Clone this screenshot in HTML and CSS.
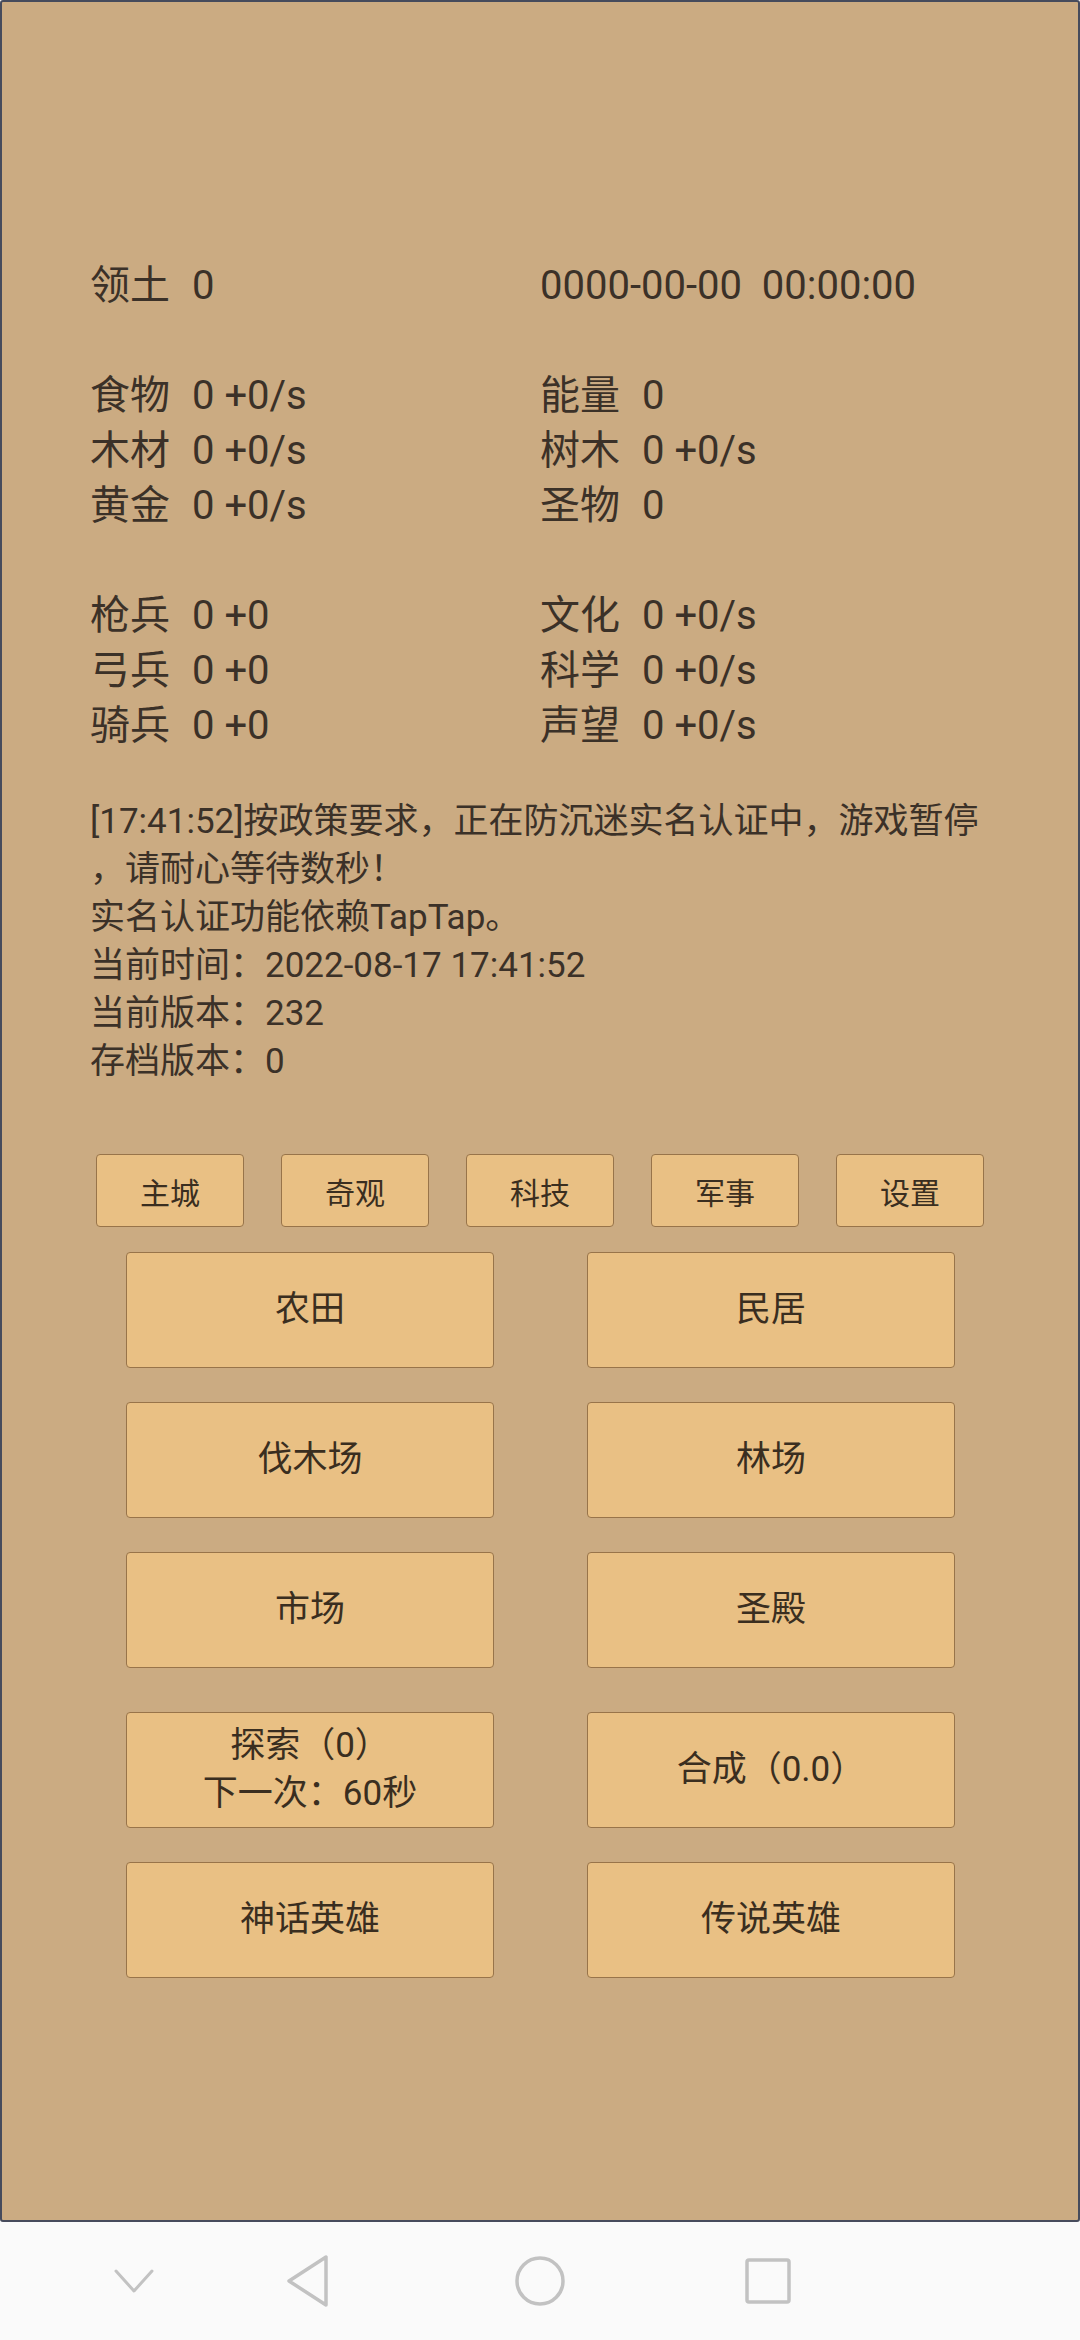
FILE: index.html
```html
<!DOCTYPE html>
<html>
	<head>
		<meta charset="utf-8">
		<title></title>
		<link rel="stylesheet" href="styles.css">
	</head>
	<body>
		<div class="game">
			<div class="stats">
				<div class="stat"><span class="label">领土</span>0</div>
				<div class="stat date">0000-00-00  00:00:00</div>
				<div class="blank"></div>
				<div class="stat"><span class="label">食物</span>0 +0/s</div>
				<div class="stat"><span class="label">能量</span>0</div>
				<div class="stat"><span class="label">木材</span>0 +0/s</div>
				<div class="stat"><span class="label">树木</span>0 +0/s</div>
				<div class="stat"><span class="label">黄金</span>0 +0/s</div>
				<div class="stat"><span class="label">圣物</span>0</div>
				<div class="blank"></div>
				<div class="stat"><span class="label">枪兵</span>0 +0</div>
				<div class="stat"><span class="label">文化</span>0 +0/s</div>
				<div class="stat"><span class="label">弓兵</span>0 +0</div>
				<div class="stat"><span class="label">科学</span>0 +0/s</div>
				<div class="stat"><span class="label">骑兵</span>0 +0</div>
				<div class="stat"><span class="label">声望</span>0 +0/s</div>
			</div>

			<div class="log">
				[17:41:52]按政策要求，正在防沉迷实名认证中，游戏暂停<br>
				，请耐心等待数秒！<br>
				实名认证功能依赖TapTap。<br>
				当前时间：2022-08-17 17:41:52<br>
				当前版本：232<br>
				存档版本：0
			</div>

			<div class="tabs">
				<span class="tab">主城</span>
				<span class="tab">奇观</span>
				<span class="tab">科技</span>
				<span class="tab">军事</span>
				<span class="tab">设置</span>
			</div>

			<div class="buildings">
				<div class="btn">农田</div>
				<div class="btn">民居</div>
				<div class="btn">伐木场</div>
				<div class="btn">林场</div>
				<div class="btn">市场</div>
				<div class="btn">圣殿</div>
				<div class="btn low">探索（0）<br>下一次：60秒</div>
				<div class="btn low">合成（0.0）</div>
				<div class="btn">神话英雄</div>
				<div class="btn">传说英雄</div>
			</div>
		</div>

		<div class="navbar">
			<svg class="nav-down" width="40" height="26" viewBox="0 0 40 26">
				<polyline points="2,3 20,23 38,3" fill="none" stroke="#c2c2c2" stroke-width="3" stroke-linejoin="round" stroke-linecap="round"/>
			</svg>
			<svg class="nav-back" width="44" height="54" viewBox="0 0 44 54">
				<polygon points="3,27 40,3 40,51" fill="none" stroke="#c2c2c2" stroke-width="3.5" stroke-linejoin="round"/>
			</svg>
			<svg class="nav-home" width="52" height="52" viewBox="0 0 52 52">
				<circle cx="26" cy="26" r="23" fill="none" stroke="#c2c2c2" stroke-width="3.5"/>
			</svg>
			<svg class="nav-recent" width="48" height="48" viewBox="0 0 48 48">
				<rect x="3" y="3" width="42" height="42" rx="2" fill="none" stroke="#c2c2c2" stroke-width="3.5"/>
			</svg>
		</div>
	</body>
</html>
```

FILE: styles.css
```css
* {
	margin: 0;
	padding: 0;
	box-sizing: border-box;
}

body {
	width: 1080px;
	height: 2340px;
	font-family: Roboto, "Noto Sans CJK SC", sans-serif;
	color: #3b3128;
	background-color: #fafafa;
}

.game {
	height: 2222px;
	background-color: #cbab82;
	border: 2px solid #464b5c;
	border-radius: 3px;
	padding: 256px 0 0 88px;
}

/* 资源 */
.stats {
	display: grid;
	grid-template-columns: 450px 1fr;
	grid-auto-rows: 55px;
	font-size: 40px;
	line-height: 55px;
}

.stats .blank {
	grid-column: 1 / 3;
}

.stat .label {
	margin-right: 22px;
}

.date {
	white-space: pre;
}

/* 日志 */
.log {
	margin-top: 45px;
	font-size: 35px;
	line-height: 48px;
}

/* 页签 */
.tabs {
	display: flex;
	gap: 37px;
	margin: 68px 0 0 6px;
}

.tab {
	width: 148px;
	height: 73px;
	display: flex;
	align-items: center;
	justify-content: center;
	background-color: #e9c084;
	border: 1.5px solid #98744a;
	border-radius: 4px;
	font-size: 30px;
	color: #3a2e20;
}

/* 建筑 */
.buildings {
	display: grid;
	grid-template-columns: 368px 368px;
	grid-template-rows: 116px 116px 116px 126px 116px;
	column-gap: 93px;
	row-gap: 34px;
	margin: 25px 0 0 36px;
}

.btn {
	display: flex;
	align-items: center;
	justify-content: center;
	text-align: center;
	background-color: #e9c084;
	border: 1.5px solid #98744a;
	border-radius: 4px;
	font-size: 35px;
	line-height: 48px;
	color: #3a2e20;
}

.btn.low {
	height: 116px;
	align-self: end;
}

/* 导航栏 */
.navbar {
	height: 118px;
	display: flex;
	align-items: center;
	background-color: #fafafa;
}

.nav-down {
	margin-left: 114px;
}

.nav-back {
	margin-left: 132px;
}

.nav-home {
	margin-left: 184px;
}

.nav-recent {
	margin-left: 178px;
}
```
